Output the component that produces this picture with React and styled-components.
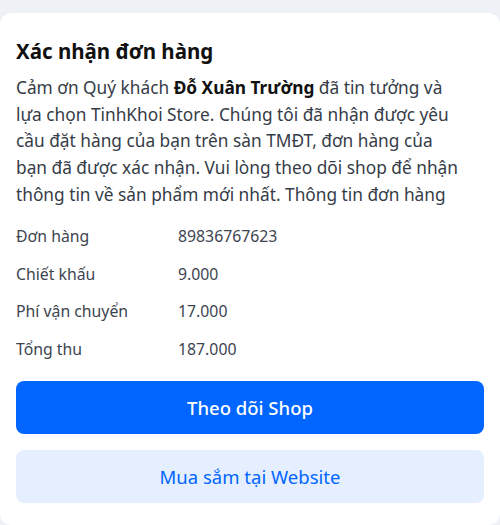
import styled, { createGlobalStyle } from "styled-components";

const GlobalStyle = createGlobalStyle`
  body {
    margin: 0;
    background: #eef2f7;
    font-family: "Noto Sans", Lato, sans-serif;
  }
`;

const Page = styled.div`
  padding-top: 13px;
`;

const Card = styled.div`
  background: #fff;
  border-radius: 12px;
  padding: 24px 16px 22px;
`;

const Title = styled.h2`
  margin: 0;
  font-size: 20.5px;
  line-height: 28px;
  font-weight: 700;
  color: #111;
`;

const Message = styled.p`
  margin: 10px 0 0;
  font-size: 17.3px;
  line-height: 26.67px;
  color: #363c47;
  white-space: nowrap;

  b {
    color: #111;
    font-weight: 700;
  }
`;

const InfoList = styled.div`
  margin-top: 9px;
  display: flex;
  flex-direction: column;
`;

const InfoRow = styled.div`
  display: flex;
  align-items: center;
  height: 37.5px;
  font-size: 15.8px;
  color: #3d4450;
`;

const InfoLabel = styled.span`
  width: 162px;
`;

const InfoValue = styled.span``;

const Actions = styled.div`
  margin-top: 14px;
  display: flex;
  flex-direction: column;
  gap: 16px;
`;

const Button = styled.button`
  height: 53px;
  border: none;
  border-radius: 8px;
  font-family: inherit;
  font-size: 18.5px;
  font-weight: ${(p) => (p.$primary ? 500 : 400)};
  background: ${(p) => (p.$primary ? "#0066ff" : "#e6efff")};
  color: ${(p) => (p.$primary ? "#fff" : "#0066ff")};
  cursor: pointer;
`;

const rows = [
  ["Đơn hàng", "89836767623"],
  ["Chiết khấu", "9.000"],
  ["Phí vận chuyển", "17.000"],
  ["Tổng thu", "187.000"],
];

export default function App() {
  return (
    <Page>
      <GlobalStyle />
      <Card>
        <Title>Xác nhận đơn hàng</Title>
        <Message>
          Cảm ơn Quý khách <b>Đỗ Xuân Trường</b> đã tin tưởng và
          <br />
          lựa chọn TinhKhoi Store. Chúng tôi đã nhận được yêu
          <br />
          cầu đặt hàng của bạn trên sàn TMĐT, đơn hàng của
          <br />
          bạn đã được xác nhận. Vui lòng theo dõi shop để nhận
          <br />
          thông tin về sản phẩm mới nhất. Thông tin đơn hàng
        </Message>
        <InfoList>
          {rows.map(([label, value]) => (
            <InfoRow key={label}>
              <InfoLabel>{label}</InfoLabel>
              <InfoValue>{value}</InfoValue>
            </InfoRow>
          ))}
        </InfoList>
        <Actions>
          <Button $primary>Theo dõi Shop</Button>
          <Button>Mua sắm tại Website</Button>
        </Actions>
      </Card>
    </Page>
  );
}
